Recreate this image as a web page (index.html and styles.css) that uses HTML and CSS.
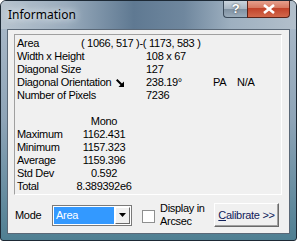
FILE: index.html
```html
<!DOCTYPE html>
<html lang="en">
<head>
    <meta charset="UTF-8">
    <title>Information</title>
    <link rel="stylesheet" href="styles.css">
</head>
<body>
    <div class="window">
        <div class="titlebar">
            <span class="title">Information</span>
            <div class="caption">
                <span class="cap-btn help">?</span>
                <span class="cap-btn close">
                    <svg width="14" height="10" viewBox="0 0 14 10">
                        <path d="M2 1 L12 9 M12 1 L2 9" stroke="#fff" stroke-width="2.6" fill="none"/>
                    </svg>
                </span>
            </div>
        </div>
        <div class="client">
            <div class="panel">
                <div class="row"><span class="label area-label">Area</span><span>( 1066, 517 )-( 1173, 583 )</span></div>
                <div class="row"><span class="label">Width x Height</span><span>108 x 67</span></div>
                <div class="row"><span class="label">Diagonal Size</span><span>127</span></div>
                <div class="row">
                    <span class="label">Diagonal Orientation
                        <svg class="arrow" width="8" height="8" viewBox="0 0 8 8">
                            <polygon points="1.4,0 5.95,4.55 8,2.5 8,8 2.5,8 4.55,5.95 0,1.4" fill="#000"/>
                        </svg>
                    </span>
                    <span class="angle">238.19°</span><span class="pa">PA</span><span>N/A</span>
                </div>
                <div class="row"><span class="label">Number of Pixels</span><span>7236</span></div>
                <div class="row"></div>
                <div class="row"><span class="stat-label"></span><span class="stat-val">Mono</span></div>
                <div class="row"><span class="stat-label">Maximum</span><span class="stat-val">1162.431</span></div>
                <div class="row"><span class="stat-label">Minimum</span><span class="stat-val">1157.323</span></div>
                <div class="row"><span class="stat-label">Average</span><span class="stat-val">1159.396</span></div>
                <div class="row"><span class="stat-label">Std Dev</span><span class="stat-val">0.592</span></div>
                <div class="row"><span class="stat-label">Total</span><span class="stat-val">8.389392e6</span></div>
            </div>
            <div class="controls">
                <span class="mode-label">Mode</span>
                <div class="combo">
                    <span class="combo-text">Area</span>
                    <span class="combo-btn">
                        <svg width="7" height="4" viewBox="0 0 7 4"><polygon points="0,0 7,0 3.5,4" fill="#000"/></svg>
                    </span>
                </div>
                <span class="checkbox"></span>
                <span class="check-label">Display in<br>Arcsec</span>
                <span class="button"><u>C</u>alibrate &gt;&gt;</span>
            </div>
        </div>
    </div>
</body>
</html>
```

FILE: styles.css
```css
body {
    margin: 0;
    font-family: "Liberation Sans", Arial, sans-serif;
    font-size: 11px;
    letter-spacing: -0.3px;
    background-color: #fff;
}

.window {
    width: 297px;
    height: 241px;
    box-sizing: border-box;
    display: flex;
    flex-direction: column;
    border: 1px solid #1d2935;
    border-radius: 6px 6px 3px 3px;
    background: linear-gradient(to bottom, #aebccb 0%, #8ea4b7 50%, #4f7f92 100%);
    padding: 0 6px 6px 6px;
    overflow: hidden;
}

.titlebar {
    height: 28px;
    display: flex;
    align-items: flex-start;
    margin: 0 -6px;
    padding: 0 6px 0 7px;
    background: linear-gradient(to right, #b8c4cf 0%, #9aacbd 22%, #5f7992 45%, #6f879e 62%, #9eb0c0 78%, #b2bfcb 100%);
}

.title {
    font-family: "Noto Sans", "Liberation Sans", sans-serif;
    font-size: 12px;
    letter-spacing: 0;
    line-height: 28px;
    color: #000;
    text-shadow: 0 0 6px #e8eef3, 0 0 10px #e8eef3;
}

.caption {
    margin-left: auto;
    display: flex;
    margin-top: -1px;
}

.cap-btn {
    height: 18px;
    display: flex;
    align-items: center;
    justify-content: center;
    box-sizing: border-box;
    border: 1px solid #3b4a5a;
    border-top: none;
}

.help {
    width: 24px;
    border-radius: 0 0 0 4px;
    border-right: none;
    background: linear-gradient(to bottom, #cfd8e0 0%, #a9b7c4 50%, #7d8fa0 51%, #9aabba 100%);
    color: #fff;
    font-weight: bold;
    font-size: 13px;
    text-shadow: 0 0 2px #333;
}

.close {
    width: 43px;
    border-radius: 0 0 4px 0;
    border-color: #5a2318;
    background: linear-gradient(to bottom, #e8a593 0%, #d77a62 45%, #c2432a 50%, #d2684b 100%);
}

.client {
    flex: 1;
    background-color: #f0f0f0;
    border: 1px solid #5a6877;
    display: flex;
    flex-direction: column;
}

.panel {
    margin: 4px 7px 0 6px;
    height: 161px;
    border: 1px solid;
    border-color: #a0a0a0 #ffffff #ffffff #a0a0a0;
    padding: 2px 0 0 2px;
    box-sizing: border-box;
}

.row {
    display: flex;
    height: 13px;
    line-height: 13px;
    white-space: nowrap;
    color: #000;
}

.label {
    width: 129px;
    flex-shrink: 0;
}

.area-label {
    width: 64px;
}

.arrow {
    margin-left: 2px;
    vertical-align: -1px;
}

.angle {
    width: 67px;
}

.pa {
    width: 24px;
}

.stat-label {
    width: 57px;
    flex-shrink: 0;
}

.stat-val {
    width: 60px;
    text-align: center;
}

.controls {
    display: flex;
    align-items: center;
    height: 24px;
    margin-top: 8px;
    padding-left: 7px;
}

.mode-label {
    width: 37px;
}

.combo {
    width: 80px;
    height: 21px;
    box-sizing: border-box;
    border: 1px solid #7a7a7a;
    background-color: #fff;
    display: flex;
    align-items: stretch;
    padding: 1px;
}

.combo-text {
    flex: 1;
    background-color: #3399ff;
    color: #fff;
    padding-left: 2px;
    line-height: 17px;
}

.combo-btn {
    width: 15px;
    margin-left: 1px;
    background-color: #f0f0f0;
    border: 1px solid;
    border-color: #fff #696969 #696969 #fff;
    box-sizing: border-box;
    display: flex;
    align-items: center;
    justify-content: center;
}

.checkbox {
    width: 13px;
    height: 13px;
    box-sizing: border-box;
    border: 1px solid #8e8f8f;
    background-color: #fff;
    margin-left: 10px;
    margin-top: 3px;
}

.check-label {
    margin-left: 5px;
    line-height: 13px;
    width: 54px;
}

.button {
    width: 65px;
    height: 24px;
    box-sizing: border-box;
    border: 1px solid;
    border-color: #ffffff #696969 #696969 #ffffff;
    box-shadow: inset -1px -1px #a0a0a0;
    background-color: #f0f0f0;
    display: flex;
    align-items: center;
    justify-content: center;
    color: #10205a;
}
```
